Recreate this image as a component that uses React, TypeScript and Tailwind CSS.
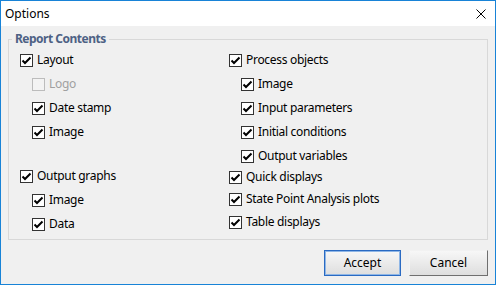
import React from 'react';

const font = { fontFamily: '"Segoe UI", "Noto Sans", "Open Sans", sans-serif' };

function CheckBox({ checked, disabled }: { checked?: boolean; disabled?: boolean }) {
  return (
    <span
      className={
        'flex h-[13px] w-[13px] shrink-0 items-center justify-center border ' +
        (disabled ? 'border-[#bcbcbc] bg-[#f3f3f3]' : 'border-[#333333] bg-white')
      }
    >
      {checked && (
        <svg width="11" height="11" viewBox="0 0 11 11">
          <path d="M1.5 5.5 L4 8 L9.5 2.5" fill="none" stroke="#000" strokeWidth="2" />
        </svg>
      )}
    </span>
  );
}

function Row({
  label,
  checked = true,
  disabled,
  indent,
  className = '',
}: {
  label: string;
  checked?: boolean;
  disabled?: boolean;
  indent?: boolean;
  className?: string;
}) {
  return (
    <div className={'flex h-[24px] items-center gap-[4px] ' + (indent ? 'pl-[12px] ' : '') + className}>
      <CheckBox checked={checked} disabled={disabled} />
      <span
        className={
          'text-[12px] leading-none tracking-[-0.3px] ' + (disabled ? 'text-[#a0a0a0]' : 'text-black')
        }
      >
        {label}
      </span>
    </div>
  );
}

export default function App() {
  return (
    <div style={font} className="flex h-[285px] w-[496px] flex-col border border-[#1883d7] bg-[#f0f0f0]">
      {/* Title bar */}
      <div className="flex h-[25px] shrink-0 items-center justify-between bg-white pl-[4px] pr-[9px]">
        <span className="text-[12px] text-black">Options</span>
        <svg width="10" height="10" viewBox="0 0 10 10">
          <path d="M0.5 0.5 L9.5 9.5 M9.5 0.5 L0.5 9.5" stroke="#000" strokeWidth="1" />
        </svg>
      </div>

      <div className="flex flex-1 flex-col px-[7px]">
        {/* Group box */}
        <fieldset className="mt-[5px] border border-[#d8d8d8]">
          <legend className="ml-[3px] px-[3px] text-[12px] font-bold leading-[16px] tracking-[-0.5px] text-[#4d6184]">
            Report Contents
          </legend>
          <div className="flex pb-[3px] pt-[1px]">
            <div className="flex w-[220px] flex-col pl-[11px]">
              <Row label="Layout" />
              <Row label="Logo" checked={false} disabled indent />
              <Row label="Date stamp" indent />
              <Row label="Image" indent />
              <Row label="Output graphs" className="mt-[20px]" />
              <Row label="Image" indent />
              <Row label="Data" indent />
            </div>
            <div className="flex flex-col">
              <Row label="Process objects" />
              <Row label="Image" indent />
              <Row label="Input parameters" indent />
              <Row label="Initial conditions" indent />
              <Row label="Output variables" indent />
              <Row label="Quick displays" className="mt-[-3px]" />
              <Row label="State Point Analysis plots" className="mt-[-2px]" />
              <Row label="Table displays" className="mt-[-1px]" />
            </div>
          </div>
        </fieldset>

        {/* Buttons */}
        <div className="mt-[10px] flex justify-end gap-[8px]">
          <button className="h-[26px] w-[77px] border border-[#2a6ac2] bg-gradient-to-b from-[#f7f7f7] to-[#dedede] text-[12px] text-black shadow-[inset_0_0_0_1px_#8fb6e6]">
            Accept
          </button>
          <button className="h-[26px] w-[79px] border border-t-[#f2f2f2] border-l-[#f2f2f2] border-r-[#6f6f6f] border-b-[#6f6f6f] bg-gradient-to-b from-[#f7f7f7] to-[#dedede] text-[12px] text-black">
            Cancel
          </button>
        </div>
      </div>
    </div>
  );
}
